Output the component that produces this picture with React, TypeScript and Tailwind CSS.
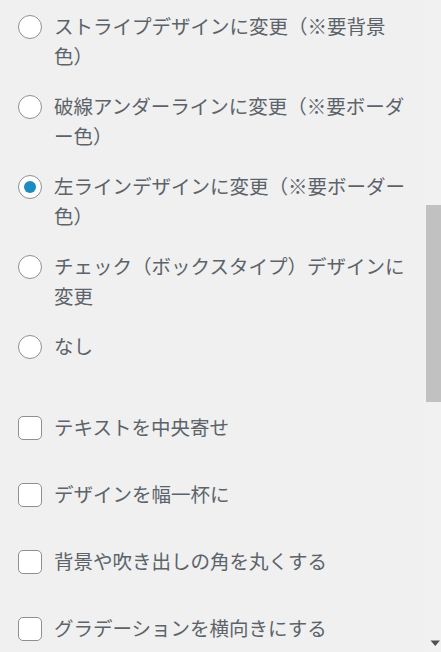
import * as React from "react";

const radios = [
  { label: "ストライプデザインに変更（※要背景色）", checked: false },
  { label: "破線アンダーラインに変更（※要ボーダー色）", checked: false },
  { label: "左ラインデザインに変更（※要ボーダー色）", checked: true },
  { label: "チェック（ボックスタイプ）デザインに変更", checked: false },
  { label: "なし", checked: false },
];

const checks = [
  "テキストを中央寄せ",
  "デザインを幅一杯に",
  "背景や吹き出しの角を丸くする",
  "グラデーションを横向きにする",
];

function Radio({ checked }: { checked: boolean }) {
  return (
    <span className="mt-[4px] flex h-6 w-6 shrink-0 items-center justify-center rounded-full border border-[#8c8f94] bg-white">
      {checked ? <span className="h-3 w-3 rounded-full bg-[#1e8cbe]" /> : null}
    </span>
  );
}

function Checkbox() {
  return (
    <span className="mt-[4px] h-6 w-6 shrink-0 rounded-[5px] border border-[#8c8f94] bg-white" />
  );
}

export default function App() {
  return (
    <div
      className="flex h-[652px] w-[441px] overflow-hidden bg-[#f0f0f0] text-[19.5px] leading-[30px] text-[#5c636a]"
      style={{ fontFamily: '"Noto Sans CJK JP", "Noto Sans", sans-serif' }}
    >
      <div className="flex w-[424px] flex-col pl-[18px] pr-[10px] pt-[11px]">
        <div className="flex flex-col gap-5">
          {radios.map((r) => (
            <label key={r.label} className="flex items-start gap-3">
              <Radio checked={r.checked} />
              <span>{r.label}</span>
            </label>
          ))}
        </div>
        <div className="mt-[51px] flex flex-col gap-[37px]">
          {checks.map((c) => (
            <label key={c} className="flex items-start gap-3">
              <Checkbox />
              <span>{c}</span>
            </label>
          ))}
        </div>
      </div>
      <div className="flex h-full w-[17px] flex-col items-end bg-[#f1f1f1]">
        <div className="mt-[205px] h-[197px] w-[15px] bg-[#c1c1c1]" />
        <div className="flex-1" />
        <svg width="17" height="17" viewBox="0 0 17 17" className="block">
          <path d="M6.5 5.5 L16 5.5 L11.25 11 Z" fill="#505050" />
        </svg>
      </div>
    </div>
  );
}
